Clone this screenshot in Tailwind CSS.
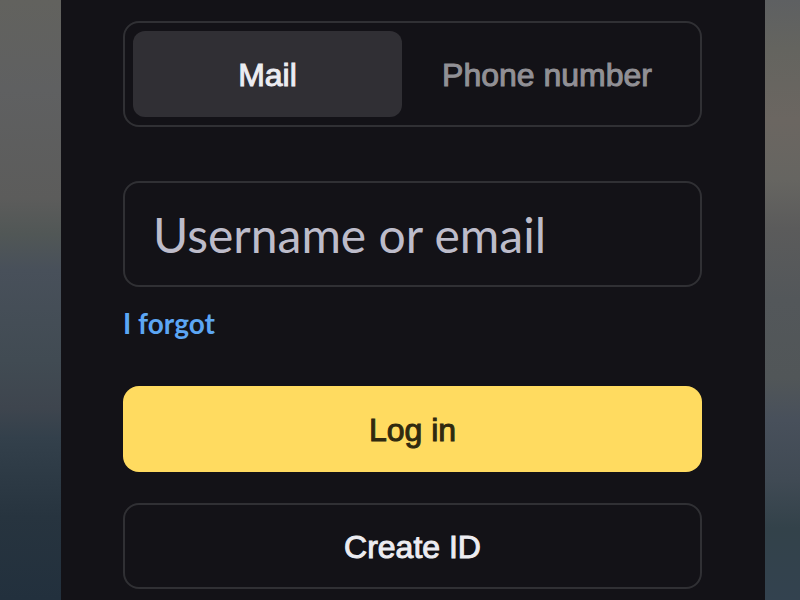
<!DOCTYPE html>
<html lang="en">
<head>
<meta charset="utf-8">
<meta name="viewport" content="width=device-width, initial-scale=1">
<title>Log in</title>
<script src="https://cdn.jsdelivr.net/npm/@tailwindcss/browser@4"></script>
</head>
<body class="flex min-h-screen bg-[#131217] font-['Liberation_Sans',Arial,sans-serif]">
<div class="w-[61px] shrink-0 bg-[linear-gradient(to_bottom,#62625e_0%,#5f6061_15%,#5c5c5b_33%,#515756_39%,#48505a_45%,#414b53_60%,#3e454e_68%,#33404b_73%,#27343f_86%,#22303d_100%)]"></div>
<main class="min-w-0 flex-1 pt-[21px] pr-[63px] pl-[62px]">
  <form class="flex flex-col">
    <div role="tablist" aria-label="Login method" class="grid grid-cols-[269fr_290fr] rounded-2xl border-2 border-[#303034] p-2">
      <button type="button" role="tab" aria-selected="true" class="h-[86px] rounded-xl bg-[#302f34] pt-0.5 text-[32px] text-[#ececf1] [-webkit-text-stroke:1px_#ececf1]">Mail</button>
      <button type="button" role="tab" aria-selected="false" class="h-[86px] rounded-xl pt-0.5 text-[32px] text-[#919095] [-webkit-text-stroke:1px_#919095]">Phone number</button>
    </div>
    <input id="login" type="text" aria-label="Username or email" placeholder="Username or email" class="mt-[54px] h-[106px] w-full rounded-2xl border-2 border-[#303034] bg-transparent px-7 font-['Lato',sans-serif] text-[48px] text-white placeholder:text-[#bdbcca] focus:outline-none">
    <a href="#forgot" class="mt-4 self-start font-['Lato',sans-serif] text-[28px] leading-10 font-bold text-[#5ca6f4]">I forgot</a>
    <button type="submit" class="mt-[43px] h-[86px] rounded-2xl bg-[#ffdb60] pt-0.5 text-[32px] text-[#30290f] [-webkit-text-stroke:1px_#30290f]">Log in</button>
    <button type="button" class="mt-[31px] h-[86px] rounded-2xl border-2 border-[#303034] pt-0.5 text-[32px] text-[#ececf1] [-webkit-text-stroke:1px_#ececf1]">Create ID</button>
  </form>
</main>
<div class="w-[35px] shrink-0 bg-[linear-gradient(to_bottom,#5e6062_0%,#64645f_8%,#6b6661_20%,#666561_30%,#5b5b5b_38%,#53575a_50%,#515658_63%,#48505b_70%,#404a54_80%,#33424a_88%,#33424f_100%)]"></div>
</body>
</html>
